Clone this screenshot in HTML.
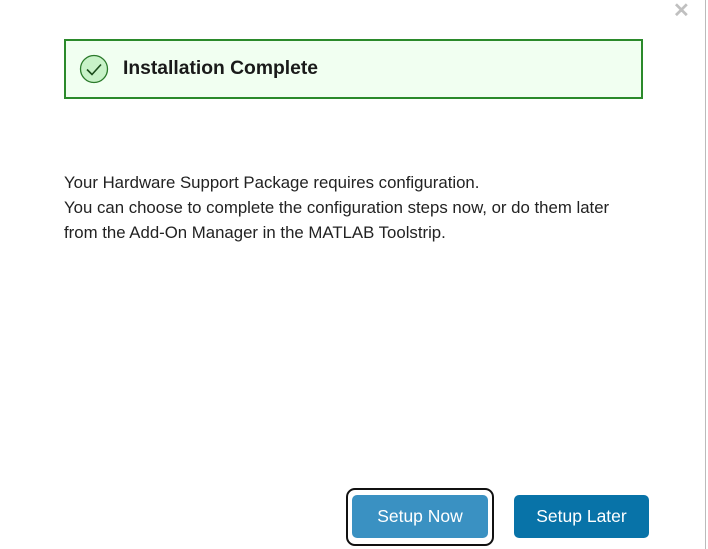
<!DOCTYPE html>
<html><head><style>
body{margin:0;width:708px;height:549px;background:#fff;font-family:"Liberation Sans",Arial,sans-serif;position:relative;overflow:hidden}
.x{position:absolute;left:673px;top:-2px;font-size:20px;color:#c0c0c0;font-weight:bold}
.box{position:absolute;left:64px;top:39px;width:575px;height:56px;border:2px solid #2b8a2b;background:#f1fff1}
.box svg{position:absolute;left:13px;top:13px}
.box .t{position:absolute;left:57px;top:17px;font-size:19.3px;font-weight:bold;color:#1a1a1a}
.msg{position:absolute;left:64px;top:170px;font-size:16.8px;line-height:25px;color:#222}
.btn{position:absolute;top:495px;height:43px;border-radius:5px;color:#fff;font-size:17.5px;text-align:center;line-height:43px}
.focus{position:absolute;left:346px;top:488px;width:144px;height:54px;border:2px solid #111;border-radius:9px}
.rb{position:absolute;left:705px;top:0;width:1px;height:549px;background:#bbb}
</style></head><body>
<div class="x">✕</div>
<div class="rb"></div>
<div class="box">
<svg width="30" height="30" viewBox="0 0 30 30"><circle cx="15" cy="15" r="13.5" fill="#c8f2c8" stroke="#2b7a2b" stroke-width="1.3"/><path d="M8 15.5l5 5 9-10" fill="none" stroke="#1a4a1a" stroke-width="1.6"/></svg>
<div class="t">Installation Complete</div>
</div>
<div class="msg">Your Hardware Support Package requires configuration.<br>You can choose to complete the configuration steps now, or do them later<br>from the Add-On Manager in the MATLAB Toolstrip.</div>
<div class="focus"></div>
<div class="btn" style="left:352px;width:136px;background:#3a91c2">Setup Now</div>
<div class="btn" style="left:514px;width:135px;background:#0873a8">Setup Later</div>
</body></html>
